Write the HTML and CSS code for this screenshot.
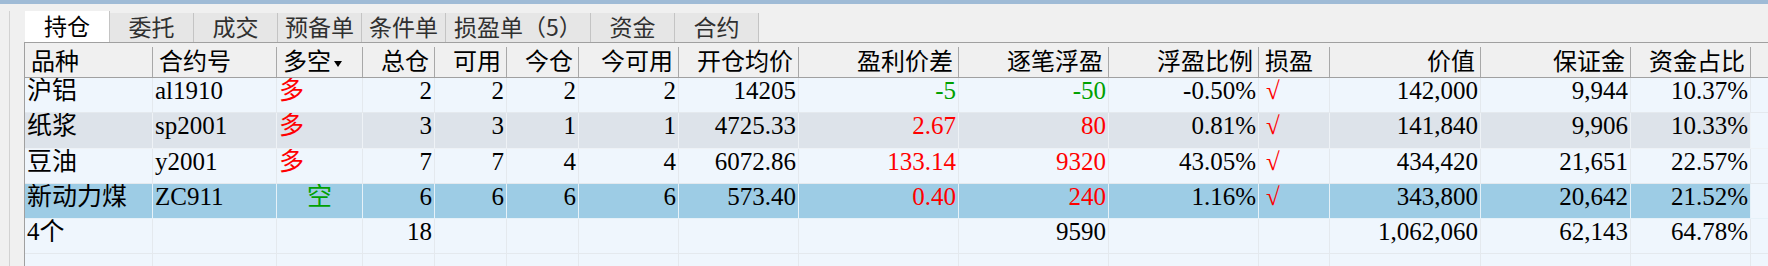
FILE: index.html
```html
<!DOCTYPE html>
<html lang="zh-CN">
<head>
<meta charset="utf-8">
<title>持仓</title>
<link rel="stylesheet" href="styles.css">
</head>
<body>
<div class="topbar"></div>
<div class="window">
  <div class="side"></div>
  <div class="panel">
    <div class="tabs">
      <div class="tab active">持仓</div>
      <div class="tab">委托</div>
      <div class="tab">成交</div>
      <div class="tab">预备单</div>
      <div class="tab">条件单</div>
      <div class="tab wide">损盈单（5）</div>
      <div class="tab">资金</div>
      <div class="tab">合约</div>
    </div>
    <div class="grid">
      <div class="row head">
        <div class="h">品种</div>
        <div class="h">合约号</div>
        <div class="h">多空<svg class="sort" width="8" height="6" viewBox="0 0 8 6"><polygon points="0,0 8,0 4,6" fill="#000"/></svg></div>
        <div class="h r">总仓</div>
        <div class="h r">可用</div>
        <div class="h r">今仓</div>
        <div class="h r">今可用</div>
        <div class="h r">开仓均价</div>
        <div class="h r">盈利价差</div>
        <div class="h r">逐笔浮盈</div>
        <div class="h r">浮盈比例</div>
        <div class="h">损盈</div>
        <div class="h r">价值</div>
        <div class="h r">保证金</div>
        <div class="h r">资金占比</div>
        <div class="h fill"></div>
      </div>

      <div class="row">
        <div class="d">沪铝</div>
        <div class="d">al1910</div>
        <div class="d dir red">多</div>
        <div class="d r">2</div>
        <div class="d r">2</div>
        <div class="d r">2</div>
        <div class="d r">2</div>
        <div class="d r">14205</div>
        <div class="d r green">-5</div>
        <div class="d r green">-50</div>
        <div class="d r">-0.50%</div>
        <div class="d chk red">√</div>
        <div class="d r">142,000</div>
        <div class="d r">9,944</div>
        <div class="d r">10.37%</div>
        <div class="d fill"></div>
      </div>

      <div class="row alt">
        <div class="d">纸浆</div>
        <div class="d">sp2001</div>
        <div class="d dir red">多</div>
        <div class="d r">3</div>
        <div class="d r">3</div>
        <div class="d r">1</div>
        <div class="d r">1</div>
        <div class="d r">4725.33</div>
        <div class="d r red">2.67</div>
        <div class="d r red">80</div>
        <div class="d r">0.81%</div>
        <div class="d chk red">√</div>
        <div class="d r">141,840</div>
        <div class="d r">9,906</div>
        <div class="d r">10.33%</div>
        <div class="d fill"></div>
      </div>

      <div class="row">
        <div class="d">豆油</div>
        <div class="d">y2001</div>
        <div class="d dir red">多</div>
        <div class="d r">7</div>
        <div class="d r">7</div>
        <div class="d r">4</div>
        <div class="d r">4</div>
        <div class="d r">6072.86</div>
        <div class="d r red">133.14</div>
        <div class="d r red">9320</div>
        <div class="d r">43.05%</div>
        <div class="d chk red">√</div>
        <div class="d r">434,420</div>
        <div class="d r">21,651</div>
        <div class="d r">22.57%</div>
        <div class="d fill"></div>
      </div>

      <div class="row sel">
        <div class="d">新动力煤</div>
        <div class="d">ZC911</div>
        <div class="d c green">空</div>
        <div class="d r">6</div>
        <div class="d r">6</div>
        <div class="d r">6</div>
        <div class="d r">6</div>
        <div class="d r">573.40</div>
        <div class="d r red">0.40</div>
        <div class="d r red">240</div>
        <div class="d r">1.16%</div>
        <div class="d chk red">√</div>
        <div class="d r">343,800</div>
        <div class="d r">20,642</div>
        <div class="d r">21.52%</div>
        <div class="d fill"></div>
      </div>

      <div class="row">
        <div class="d">4个</div>
        <div class="d"></div>
        <div class="d"></div>
        <div class="d r">18</div>
        <div class="d"></div>
        <div class="d"></div>
        <div class="d"></div>
        <div class="d"></div>
        <div class="d"></div>
        <div class="d r">9590</div>
        <div class="d"></div>
        <div class="d"></div>
        <div class="d r">1,062,060</div>
        <div class="d r">62,143</div>
        <div class="d r">64.78%</div>
        <div class="d fill"></div>
      </div>

      <div class="row empty">
        <div class="d"></div>
        <div class="d"></div>
        <div class="d"></div>
        <div class="d"></div>
        <div class="d"></div>
        <div class="d"></div>
        <div class="d"></div>
        <div class="d"></div>
        <div class="d"></div>
        <div class="d"></div>
        <div class="d"></div>
        <div class="d"></div>
        <div class="d"></div>
        <div class="d"></div>
        <div class="d"></div>
        <div class="d fill"></div>
      </div>
    </div>
  </div>
</div>
</body>
</html>
```

FILE: styles.css
```css
html, body {
  margin: 0;
  padding: 0;
  overflow: hidden;
}

body {
  width: 1768px;
  height: 266px;
  background: #f0f0f0;
  font-family: "Noto Sans CJK SC", sans-serif;
  color: #000;
}

.topbar {
  height: 4px;
  background: #9fbbd6;
}

.window {
  display: flex;
  height: 262px;
}

.side {
  width: 9px;
  flex: none;
}

.panel {
  flex: 1;
  margin-top: 7px;
  border-left: 1px solid #d2d2d2;
  padding-left: 14px;
  display: flex;
  flex-direction: column;
  min-width: 0;
}

/* tabs */
.tabs {
  display: flex;
  align-items: flex-end;
  height: 31px;
  margin-left: 1px;
}

.tab {
  box-sizing: border-box;
  width: 84px;
  height: 29px;
  background: #e6e6e6;
  border-right: 1px solid #c4c4c4;
  font-size: 23px;
  line-height: 27px;
  text-align: center;
  color: #303030;
  white-space: nowrap;
}

.tab.active {
  width: 85px;
  height: 31px;
  line-height: 29px;
  background: #ffffff;
  color: #000;
}

.tab.wide {
  width: 145px;
}

/* grid */
.grid {
  display: grid;
  grid-template-columns: 128px 124px 86px 72px 72px 72px 100px 120px 160px 150px 150px 71px 151px 150px 120px 1fr;
  grid-template-rows: 35px 35px 36px 35px 35px 35px 12px;
  border-top: 1px solid #a0a0a0;
  border-left: 1px solid #a0a0a0;
  background: #eff6fd;
}

.row {
  display: contents;
}

.h, .d {
  box-sizing: border-box;
  white-space: nowrap;
  overflow: hidden;
}

.h {
  font-family: "Noto Sans CJK SC", sans-serif;
  font-size: 24px;
  line-height: 34px;
  padding: 0 6px 0 6px;
  background: #f0f0f0 linear-gradient(#a8a8a8, #a8a8a8) no-repeat right 0 top 4px / 1px calc(100% - 4px);
  border-bottom: 1px solid #a0a0a0;
}

.h.fill {
  background: #f0f0f0;
}

.sort {
  margin-left: 3px;
  vertical-align: 3px;
}

.d {
  font-family: "Liberation Serif", "Noto Sans CJK SC", serif;
  font-size: 25px;
  line-height: 26px;
  padding: 0 2px 0 2px;
  background: #eff6fd;
  border-right: 1px solid #e4e9ee;
  border-bottom: 1px solid #e4e9ee;
}

.row.empty .d {
  border-bottom: none;
}

.row.alt .d {
  background: #dde3ea;
  border-color: #eef2f6;
}

.row.sel .d {
  background: #9dcce5;
  border-color: #e6f1f8;
}

.row .d.fill {
  background: #eff6fd;
  border-right: none;
}

.r {
  text-align: right;
}

.c {
  text-align: center;
}

.dir {
  padding-left: 2px;
}

.chk {
  padding-left: 7px;
}

.red {
  color: #ff0000;
}

.green {
  color: #00a000;
}
```
